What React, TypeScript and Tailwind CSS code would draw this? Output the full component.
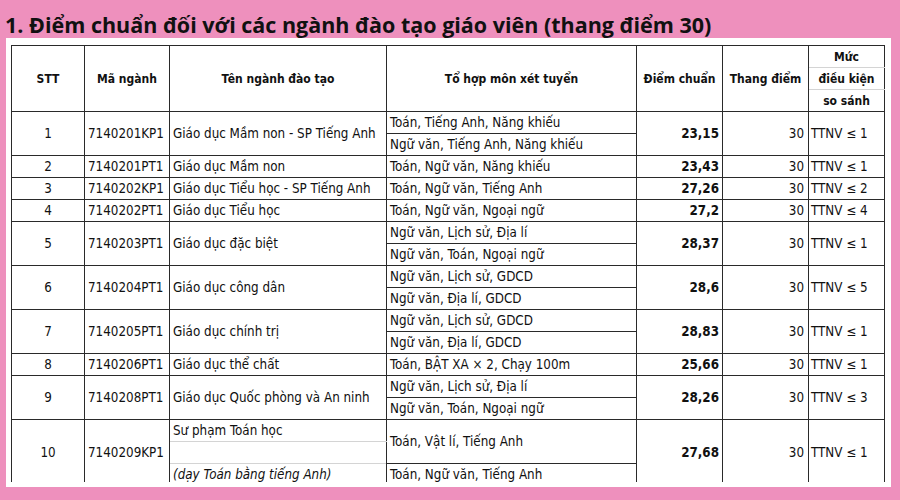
import clsx from 'clsx';
import type { ReactNode } from 'react';

interface Row {
  stt: number;
  ma: string;
  ten: string;
  toHop: string[];
  diem: string;
  dieuKien: string;
}

const rows: Row[] = [
  { stt: 1, ma: '7140201KP1', ten: 'Giáo dục Mầm non - SP Tiếng Anh', toHop: ['Toán, Tiếng Anh, Năng khiếu', 'Ngữ văn, Tiếng Anh, Năng khiếu'], diem: '23,15', dieuKien: 'TTNV ≤ 1' },
  { stt: 2, ma: '7140201PT1', ten: 'Giáo dục Mầm non', toHop: ['Toán, Ngữ văn, Năng khiếu'], diem: '23,43', dieuKien: 'TTNV ≤ 1' },
  { stt: 3, ma: '7140202KP1', ten: 'Giáo dục Tiểu học - SP Tiếng Anh', toHop: ['Toán, Ngữ văn, Tiếng Anh'], diem: '27,26', dieuKien: 'TTNV ≤ 2' },
  { stt: 4, ma: '7140202PT1', ten: 'Giáo dục Tiểu học', toHop: ['Toán, Ngữ văn, Ngoại ngữ'], diem: '27,2', dieuKien: 'TTNV ≤ 4' },
  { stt: 5, ma: '7140203PT1', ten: 'Giáo dục đặc biệt', toHop: ['Ngữ văn, Lịch sử, Địa lí', 'Ngữ văn, Toán, Ngoại ngữ'], diem: '28,37', dieuKien: 'TTNV ≤ 1' },
  { stt: 6, ma: '7140204PT1', ten: 'Giáo dục công dân', toHop: ['Ngữ văn, Lịch sử, GDCD', 'Ngữ văn, Địa lí, GDCD'], diem: '28,6', dieuKien: 'TTNV ≤ 5' },
  { stt: 7, ma: '7140205PT1', ten: 'Giáo dục chính trị', toHop: ['Ngữ văn, Lịch sử, GDCD', 'Ngữ văn, Địa lí, GDCD'], diem: '28,83', dieuKien: 'TTNV ≤ 1' },
  { stt: 8, ma: '7140206PT1', ten: 'Giáo dục thể chất', toHop: ['Toán, BẬT XA × 2, Chạy 100m'], diem: '25,66', dieuKien: 'TTNV ≤ 1' },
  { stt: 9, ma: '7140208PT1', ten: 'Giáo dục Quốc phòng và An ninh', toHop: ['Ngữ văn, Lịch sử, Địa lí', 'Ngữ văn, Toán, Ngoại ngữ'], diem: '28,26', dieuKien: 'TTNV ≤ 3' },
];

function Td({ children, className, rowSpan }: { children?: ReactNode; className?: string; rowSpan?: number }) {
  return (
    <td rowSpan={rowSpan} className={clsx('border border-[#2a2a2a] p-0 h-[22px] align-middle whitespace-nowrap', className)}>
      {children}
    </td>
  );
}

function Th({ children, className, rowSpan }: { children?: ReactNode; className?: string; rowSpan?: number }) {
  return (
    <th rowSpan={rowSpan} className={clsx('border border-[#2a2a2a] p-0 h-[22px] align-middle text-center font-bold text-[12px] whitespace-nowrap', className)}>
      {children}
    </th>
  );
}

export default function App() {
  return (
    <div className="w-[900px] h-[500px] bg-[#ee90bd] overflow-hidden">
      <h1 className="h-[38px] pl-[5px] pt-[12px] font-['Open_Sans',sans-serif] font-bold text-[21.5px] leading-[26px] text-[#111]">
        1. Điểm chuẩn đối với các ngành đào tạo giáo viên (thang điểm 30)
      </h1>

      <div className="ml-[6px] w-[885px] h-[449px] bg-white pl-[5px] pt-[7px]">
        <div className="h-[437px] overflow-hidden">
          <table className="border-collapse table-fixed w-[873px] text-[13.3px] text-[#111] font-['DejaVu_Sans_Condensed','Liberation_Sans',sans-serif]">
            <colgroup>
              <col className="w-[73px]" />
              <col className="w-[85px]" />
              <col className="w-[217px]" />
              <col className="w-[250px]" />
              <col className="w-[86px]" />
              <col className="w-[86px]" />
              <col className="w-[76px]" />
            </colgroup>
            <thead>
              <tr>
                <Th rowSpan={3}>STT</Th>
                <Th rowSpan={3}>Mã ngành</Th>
                <Th rowSpan={3}>Tên ngành đào tạo</Th>
                <Th rowSpan={3}>Tổ hợp môn xét tuyển</Th>
                <Th rowSpan={3}>Điểm chuẩn</Th>
                <Th rowSpan={3}>Thang điểm</Th>
                <Th className="border-b-[#d4d4d4]">Mức</Th>
              </tr>
              <tr>
                <Th className="border-t-[#d4d4d4] border-b-[#d4d4d4]">điều kiện</Th>
              </tr>
              <tr>
                <Th className="border-t-[#d4d4d4]">so sánh</Th>
              </tr>
            </thead>
            <tbody>
              {rows.map((r) =>
                r.toHop.map((t, i) => (
                  <tr key={`${r.stt}-${i}`}>
                    {i === 0 && (
                      <>
                        <Td rowSpan={r.toHop.length} className="text-center">{r.stt}</Td>
                        <Td rowSpan={r.toHop.length} className="pl-[3px]">{r.ma}</Td>
                        <Td rowSpan={r.toHop.length} className="pl-[3px]">{r.ten}</Td>
                      </>
                    )}
                    <Td className="pl-[3px]">{t}</Td>
                    {i === 0 && (
                      <>
                        <Td rowSpan={r.toHop.length} className="text-right pr-[3px] font-bold">{r.diem}</Td>
                        <Td rowSpan={r.toHop.length} className="text-right pr-[4px]">30</Td>
                        <Td rowSpan={r.toHop.length} className="pl-[2px]">{r.dieuKien}</Td>
                      </>
                    )}
                  </tr>
                ))
              )}
              <tr>
                <Td rowSpan={3} className="text-center">10</Td>
                <Td rowSpan={3} className="pl-[3px]">7140209KP1</Td>
                <Td className="pl-[3px] border-b-[#d4d4d4]">Sư phạm Toán học</Td>
                <Td rowSpan={2} className="pl-[3px]">Toán, Vật lí, Tiếng Anh</Td>
                <Td rowSpan={3} className="text-right pr-[3px] font-bold">27,68</Td>
                <Td rowSpan={3} className="text-right pr-[4px]">30</Td>
                <Td rowSpan={3} className="pl-[2px]">TTNV ≤ 1</Td>
              </tr>
              <tr>
                <Td className="border-t-[#d4d4d4] border-b-[#d4d4d4]" />
              </tr>
              <tr>
                <Td className="pl-[3px] italic border-t-[#d4d4d4]">(dạy Toán bằng tiếng Anh)</Td>
                <Td className="pl-[3px]">Toán, Ngữ văn, Tiếng Anh</Td>
              </tr>
            </tbody>
          </table>
        </div>
      </div>
    </div>
  );
}
